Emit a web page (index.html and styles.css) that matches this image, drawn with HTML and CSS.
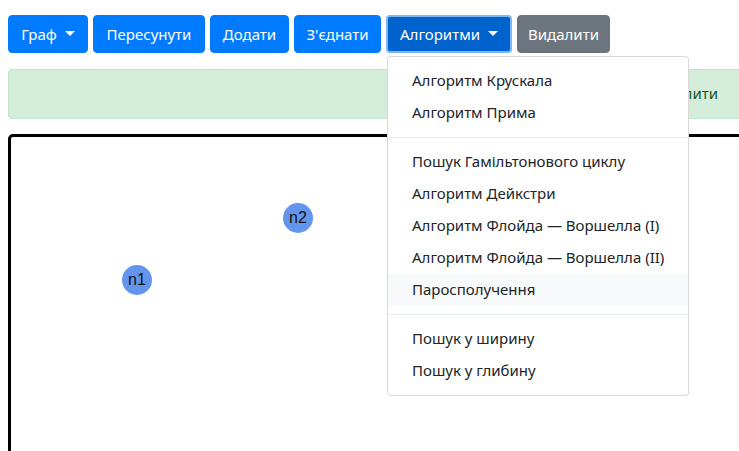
FILE: index.html
```html
<!DOCTYPE html>
<html lang="uk">
<head>
<meta charset="utf-8">
<title>Граф</title>
<link rel="stylesheet" href="styles.css">
</head>
<body>
<div class="page">
  <div class="toolbar">
    <div class="btn-group">
      <button class="btn btn-primary btn-graph">Граф<span class="caret"></span></button>
    </div>
    <button class="btn btn-primary btn-move">Пересунути</button>
    <button class="btn btn-primary btn-add">Додати</button>
    <button class="btn btn-primary btn-join">З'єднати</button>
    <div class="btn-group">
      <button class="btn btn-primary btn-active btn-algo">Алгоритми<span class="caret"></span></button>
      <div class="dropdown-menu">
        <a class="dropdown-item">Алгоритм Крускала</a>
        <a class="dropdown-item">Алгоритм Прима</a>
        <div class="dropdown-divider"></div>
        <a class="dropdown-item">Пошук Гамільтонового циклу</a>
        <a class="dropdown-item">Алгоритм Дейкстри</a>
        <a class="dropdown-item">Алгоритм Флойда — Воршелла (I)</a>
        <a class="dropdown-item">Алгоритм Флойда — Воршелла (II)</a>
        <a class="dropdown-item hover">Паросполучення</a>
        <div class="dropdown-divider"></div>
        <a class="dropdown-item">Пошук у ширину</a>
        <a class="dropdown-item">Пошук у глибину</a>
      </div>
    </div>
    <button class="btn btn-secondary btn-del">Видалити</button>
  </div>
  <div class="alert">Натисніть на вершину, щоб її видалити</div>
  <div class="canvas">
    <div class="node n1">n1</div>
    <div class="node n2">n2</div>
  </div>
</div>
</body>
</html>
```
FILE: styles.css
```css
html, body {
  margin: 0;
  padding: 0;
  overflow: hidden;
  background: #fff;
}
body {
  font-family: "Noto Sans", "Open Sans", sans-serif;
  font-size: 15px;
  line-height: 24px;
  color: #212529;
}
.page {
  width: 760px;
  height: 451px;
  box-sizing: border-box;
  overflow: hidden;
  padding: 15px 0 0 8px;
}
.toolbar {
  display: flex;
  gap: 5px;
  height: 38px;
}
.btn-group {
  position: relative;
  display: flex;
}
.btn {
  display: flex;
  align-items: center;
  justify-content: center;
  height: 38px;
  padding: 0 0 1px;
  font-family: inherit;
  font-size: 15px;
  line-height: 24px;
  border: 1px solid transparent;
  border-radius: 4px;
  color: #fff;
  box-sizing: border-box;
  white-space: nowrap;
}
.btn-primary {
  background: #007bff;
  border-color: #007bff;
}
.btn-secondary {
  background: #6c757d;
  border-color: #6c757d;
}
.btn-active {
  background: #0062cc;
  border: 2px solid #7db6f3;
}
.btn-graph { width: 80px; }
.btn-move { width: 112px; }
.btn-add { width: 79px; }
.btn-join { width: 87px; }
.btn-algo { width: 126px; }
.btn-del { width: 93px; }
.caret {
  display: inline-block;
  margin-left: 8px;
  width: 0;
  height: 0;
  border-top: 5px solid #fff;
  border-left: 5px solid transparent;
  border-right: 5px solid transparent;
  position: relative;
  top: 0;
}
.dropdown-menu {
  position: absolute;
  top: 41px;
  left: 1px;
  z-index: 10;
  width: 302px;
  box-sizing: border-box;
  padding: 8px 0;
  background: #fff;
  border: 1px solid rgba(0, 0, 0, 0.15);
  border-radius: 4px;
}
.dropdown-item {
  display: block;
  padding: 3px 24px 5px;
  line-height: 24px;
  color: #212529;
  white-space: nowrap;
}
.dropdown-item.hover {
  background: #f8f9fa;
}
.dropdown-divider {
  height: 0;
  margin: 8px 0;
  border-top: 1px solid #e9ecef;
}
.alert {
  margin-top: 16px;
  height: 50px;
  box-sizing: border-box;
  padding: 11px 41px 13px 20px;
  background: #d4edda;
  border: 1px solid #c3e6cb;
  border-radius: 4px;
  color: #155724;
  text-align: right;
  white-space: nowrap;
}
.canvas {
  position: relative;
  margin-top: 15px;
  height: 400px;
  border: 3px solid #000;
  border-radius: 5px;
}
.node {
  position: absolute;
  width: 30px;
  height: 30px;
  border-radius: 50%;
  background: #6495ed;
  color: #111;
  font-family: "Liberation Sans", Arial, sans-serif;
  font-size: 16px;
  line-height: 30px;
  text-align: center;
}
.n1 { left: 111px; top: 128px; }
.n2 { left: 272px; top: 66px; }
```
